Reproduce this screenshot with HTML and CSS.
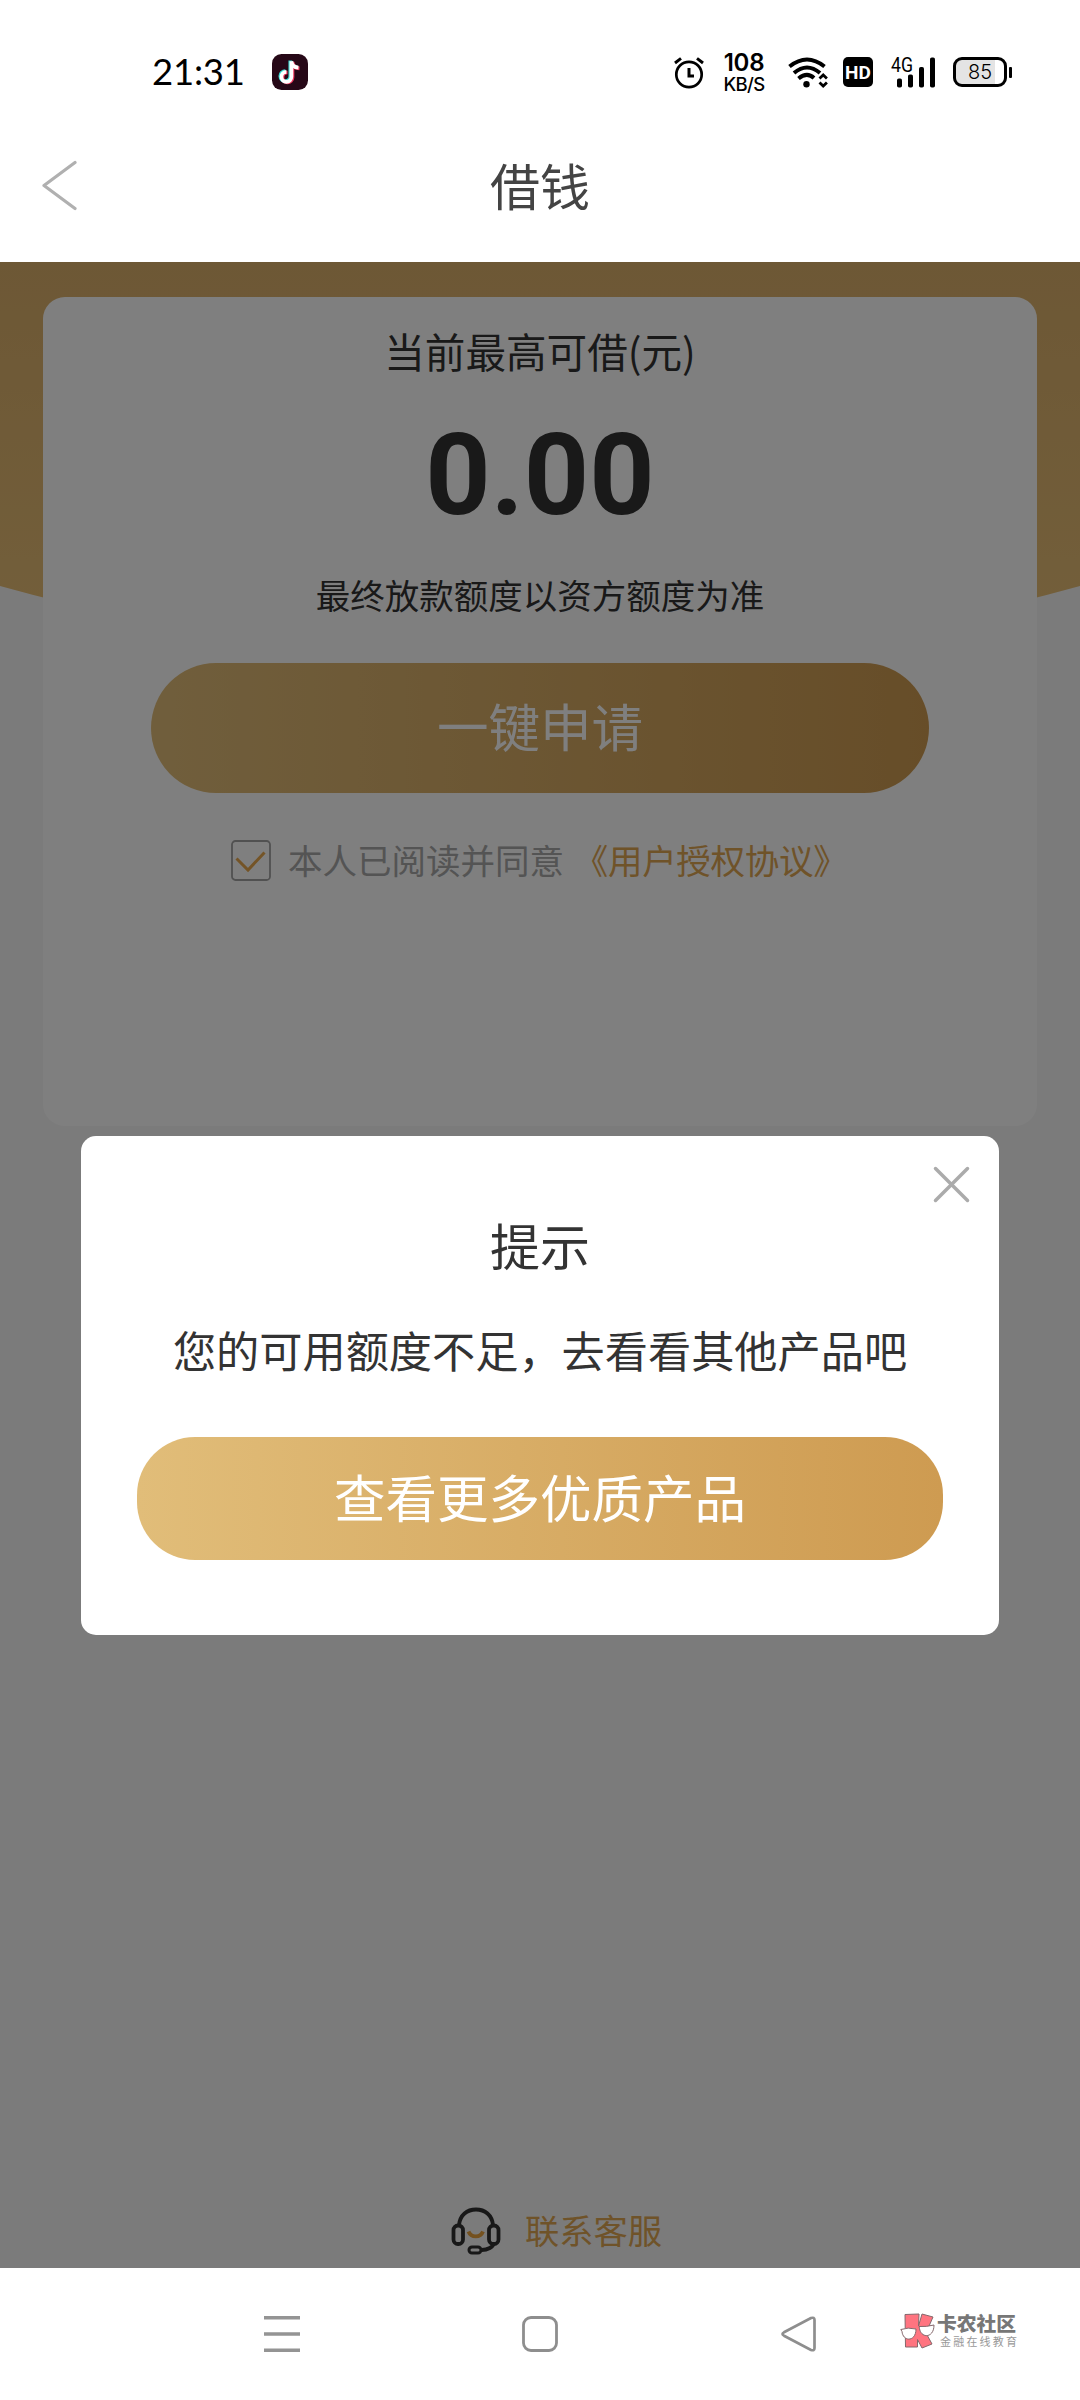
FILE: index.html
```html
<!DOCTYPE html>
<html lang="zh-CN">
<head>
<meta charset="utf-8">
<title>借钱</title>
<link rel="stylesheet" href="styles.css">
</head>
<body>
<div class="phone">
  <div class="status">
    <span class="time">21:31</span>
    <svg class="app" width="36" height="36" viewBox="0 0 36 36">
      <rect width="36" height="36" rx="9.5" fill="#260817"/>
      <g fill="none" stroke-width="3.7">
        <path d="M19 7v15.5a5 5 0 1 1-5-5M19 7c.4 4 3 6.2 7 6.4" stroke="#3fdcd6" transform="translate(-.7 -.4)"/>
        <path d="M19 7v15.5a5 5 0 1 1-5-5M19 7c.4 4 3 6.2 7 6.4" stroke="#f0365c" transform="translate(1.5 1)"/>
        <path d="M19 7v15.5a5 5 0 1 1-5-5M19 7c.4 4 3 6.2 7 6.4" stroke="#fff" transform="translate(.4 .3)"/>
      </g>
    </svg>
    <div class="indicators">
      <svg class="alarm" width="30" height="32" viewBox="0 0 30 32" fill="none" stroke="#000" stroke-width="2.7">
        <circle cx="15" cy="17.5" r="12.7"/><path d="M15 11v8h5M1 6l6-4.600M29 6l-6-4.600" stroke-width="3"/>
      </svg>
      <div class="speed"><span class="rate">108</span><span class="unit">KB/S</span></div>
      <svg class="wifi" width="40" height="32" viewBox="0 0 40 32" fill="none" stroke="#000" stroke-width="4">
        <path d="M1.500 9.500Q19 -4.500 36.500 9.500M6 16Q19 5 32 16M10.500 21.500Q19 14.500 26 21"/>
        <circle cx="18.500" cy="27.300" r="3.200" fill="#000" stroke="none"/>
        <path d="M31.500 21.500l3.700-3.500 3.700 3.500M31.500 25.500l3.700 3.500 3.700-3.500" stroke-width="2.800"/>
      </svg>
      <span class="hd">HD</span>
      <svg class="signal" width="46" height="32" viewBox="0 0 46 32">
        <text x="0" y="15" class="net" textLength="22" lengthAdjust="spacingAndGlyphs">4G</text>
        <g fill="#000"><rect x="6" y="21.500" width="5" height="9" rx="1.800"/><rect x="17" y="17.500" width="5" height="13" rx="1.800"/><rect x="28" y="10" width="5" height="20.500" rx="1.800"/><rect x="39" y=".5" width="5" height="30" rx="1.800"/></g>
      </svg>
      <div class="battery"><span class="cell">85</span><i class="nub"></i></div>
    </div>
  </div>

  <header class="titlebar">
    <svg class="back" width="36" height="52" viewBox="0 0 36 52" fill="none" stroke="#b0b0b0" stroke-width="3.200" stroke-linecap="round" stroke-linejoin="round"><path d="M33 2.500L2 25.500l31 23"/></svg>
    <h1 class="title">借钱</h1>
  </header>

  <main class="page">
    <svg class="backdrop" width="1080" height="420" viewBox="0 0 1080 420">
      <defs><linearGradient id="gold" x1="0" y1="0" x2="0" y2="1"><stop offset="0" stop-color="#dbb06b"/><stop offset="1" stop-color="#e8c077"/></linearGradient></defs>
      <path d="M0 0H1080V324Q540 474 0 324Z" fill="url(#gold)"/>
    </svg>
    <section class="card">
      <p class="label">当前最高可借(元)</p>
      <p class="amount">0.00</p>
      <p class="note">最终放款额度以资方额度为准</p>
      <div class="button apply"><span>一键申请</span></div>
      <div class="agree">
        <svg class="check" width="40" height="41" viewBox="0 0 40 41" fill="none"><rect x="1" y="1" width="38" height="39" rx="3.500" stroke="#a2a2a2" stroke-width="1.800"/><path d="M5.500 18.500L17 30 33.500 12.500" stroke="#e9a94e" stroke-width="3"/></svg>
        <p class="terms">本人已阅读并同意 <a class="link">《用户授权协议》</a></p>
      </div>
    </section>
    <div class="service">
      <svg width="50" height="48" viewBox="0 0 50 48" fill="none" stroke="#303030" stroke-width="3.800">
        <path d="M8 18C9 8 16 2.500 25 2.500S41 8 42 18"/>
        <rect x="2.500" y="18.500" width="9.500" height="18.500" rx="4.500"/>
        <rect x="38" y="18.500" width="9.500" height="18.500" rx="4.500"/>
        <path d="M43 36c-1 4-6 7-12.500 7"/>
        <rect x="18" y="40" width="12" height="6" rx="3" stroke-width="3"/>
        <path d="M17.500 24.500c2.500 6.500 12 6.500 14.500 0" stroke="#e9a23f"/>
      </svg>
      <span>联系客服</span>
    </div>
    <div class="mask">
      <div class="dialog">
        <svg class="close" width="37" height="37" viewBox="0 0 37 37" fill="none" stroke="#ababab" stroke-width="3.500" stroke-linecap="round"><path d="M2.500 2.500l32 32M34.500 2.500l-32 32"/></svg>
        <h2 class="dialog-title">提示</h2>
        <p class="dialog-text">您的可用额度不足，去看看其他产品吧</p>
        <div class="button more"><span>查看更多优质产品</span></div>
      </div>
    </div>
  </main>

  <nav class="navbar">
    <svg class="menu" width="36" height="36" viewBox="0 0 36 36"><path d="M0 1.800h36M0 18h36M0 34.300h36" stroke="#949494" stroke-width="3.400"/></svg>
    <svg class="home" width="36" height="36" viewBox="0 0 36 36"><rect x="1.500" y="1.500" width="33" height="33" rx="7.500" fill="none" stroke="#8e8e8e" stroke-width="2.800"/></svg>
    <svg class="prev" width="35" height="36" viewBox="0 0 35 36"><path d="M3 16.300L30 2.100Q33.500 .8 33.500 4V32Q33.500 35.200 30 33.900L3 19.700Q0 18 3 16.300Z" fill="none" stroke="#8e8e8e" stroke-width="2.700"/></svg>
    <div class="brand">
      <svg width="36" height="36" viewBox="0 0 36 36" stroke="#85686c" stroke-width="1">
        <path d="M5 1.500L19 1l-.5 12L22 1l11 3-7 16 6 11-10 4-4.500-8.500V34H5.500Z" fill="#ff7480"/>
        <path d="M.8 16.500Q8 14 16 16C16 29 3 29 2 18.500ZM19 13.500Q26 14 34 12C34 25.500 21 25.500 19.500 15.500Z" fill="#fff"/>
      </svg>
      <div class="brand-text"><span class="brand-name">卡农社区</span><span class="brand-sub">金融在线教育</span></div>
    </div>
  </nav>
</div>
</body>
</html>
```
FILE: styles.css
```css
* { box-sizing: border-box; margin: 0; padding: 0; }
body { font-family: "Noto Sans CJK SC", sans-serif; color: #333; background: #fff; }
svg { display: block; flex: none; }
h1, h2 { font-weight: 400; }
.phone { width: 1080px; height: 2400px; display: flex; flex-direction: column; overflow: hidden; }

.status { height: 112px; padding: 32px 68px 0 152px; display: flex; align-items: flex-start; color: #000; }
.time { width: 120px; margin-top: 17px; font: 36.500px/44px Lato, sans-serif; letter-spacing: -.2px; white-space: nowrap; }
.app { margin-top: 22px; }
.indicators { margin-left: auto; display: flex; align-items: flex-start; padding-top: 25px; }
.alarm { margin-right: 19px; }
.speed { width: 42px; margin: -6px 23px 0 0; display: flex; flex-direction: column; align-items: center; font-family: Inter, sans-serif; }
.rate { font-size: 24px; line-height: 23px; font-weight: 600; letter-spacing: -.3px; }
.unit { font-size: 18.500px; line-height: 21px; font-weight: 500; letter-spacing: -.7px; }
.wifi { margin-right: 15px; }
.hd { width: 30px; height: 30px; margin-right: 18px; border-radius: 5px; background: #000; color: #fff; font: 700 19px/31px Roboto, sans-serif; text-align: center; }
.signal { margin-right: 16px; overflow: visible; }
.net { font: 400 20px Roboto, sans-serif; }
.battery { display: flex; align-items: center; gap: 2px; }
.cell { width: 54px; height: 30px; border: 3px solid #000; border-radius: 9px; background: linear-gradient(90deg, #e4e4e4 39px, #fff 39px); font: 300 20px/25px Inter, sans-serif; text-align: center; }
.nub { width: 3px; height: 11px; border-radius: 1px; background: #000; }

.titlebar { height: 150px; padding: 46px 42px 0; display: grid; grid-template-columns: 36px 1fr 36px; }
.back { margin-top: 2px; }
.title { text-align: center; font-size: 50px; line-height: 52px; color: #444; }

.page { position: relative; height: 2006px; background: #f7f7f7; padding: 35px 43px 0; display: flex; flex-direction: column; }
.backdrop { position: absolute; left: 0; top: 0; }
.card { position: relative; height: 829px; border-radius: 22px; background: #fff; display: flex; flex-direction: column; align-items: center; padding-top: 30px; }
.label { font-size: 40.600px; line-height: 48px; }
.amount { margin-top: 40px; height: 120px; font: 700 114px/120px Roboto, sans-serif; }
.note { margin-top: 35px; font-size: 34.500px; line-height: 48px; }
.button { display: flex; align-items: flex-start; justify-content: center; color: #fff; font-size: 51.500px; line-height: 76px; background: linear-gradient(90deg, #e1bd79, #ce9b51); }
.apply { width: 778px; height: 130px; margin-top: 45px; padding-top: 24px; border-radius: 65px; }
.agree { margin-top: 43px; width: 618px; height: 48px; display: flex; align-items: center; gap: 17px; font-size: 34.500px; line-height: 48px; color: #a8a8a8; white-space: nowrap; }
.terms { padding-bottom: 3px; }
.link { margin-left: 2px; letter-spacing: -.3px; color: #dfa652; }
.service { margin-top: auto; height: 75px; display: flex; justify-content: center; gap: 24px; padding: 14px 0 0 33px; font-size: 34.300px; line-height: 44px; color: #dfa652; }
.mask { position: absolute; inset: 0; background: rgba(0, 0, 0, .5); }
.dialog { position: absolute; left: 81px; top: 874px; width: 918px; height: 499px; border-radius: 15px; background: #fff; display: flex; flex-direction: column; align-items: center; padding-top: 78px; }
.close { position: absolute; right: 29px; top: 30px; }
.dialog-title { font-size: 50px; line-height: 60px; }
.dialog-text { margin-top: 45px; font-size: 43.200px; line-height: 60px; white-space: nowrap; }
.more { width: 806px; height: 123px; margin-top: 58px; padding-top: 21px; border-radius: 58px; }

.navbar { height: 132px; padding: 48px 62px 0 264px; display: flex; align-items: flex-start; }
.menu { margin-right: 222px; }
.home { margin-right: 223px; }
.brand { margin: -3px 0 0 auto; display: flex; }
.brand-text { width: 82px; display: flex; flex-direction: column; padding-left: 1px; color: #777; white-space: nowrap; }
.brand-name { font-size: 19.800px; line-height: 20px; font-weight: 900; }
.brand-sub { font-size: 11px; line-height: 17px; letter-spacing: 2.200px; padding-left: 3px; color: #999; }
```
